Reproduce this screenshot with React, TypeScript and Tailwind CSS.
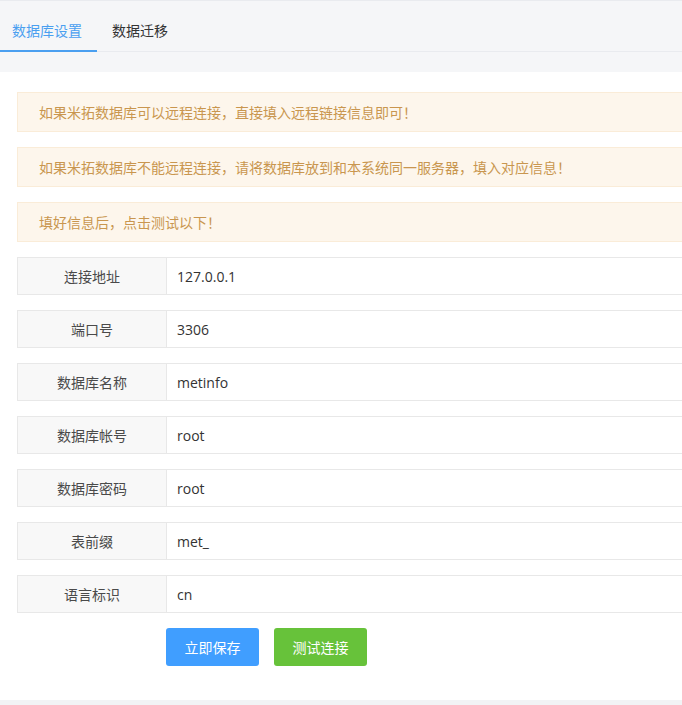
import React from "react";

const font = '"Open Sans", "Noto Sans CJK SC", sans-serif';

const alerts = [
  "如果米拓数据库可以远程连接，直接填入远程链接信息即可！",
  "如果米拓数据库不能远程连接，请将数据库放到和本系统同一服务器，填入对应信息！",
  "填好信息后，点击测试以下！",
];

const rows: [string, string][] = [
  ["连接地址", "127.0.0.1"],
  ["端口号", "3306"],
  ["数据库名称", "metinfo"],
  ["数据库帐号", "root"],
  ["数据库密码", "root"],
  ["表前缀", "met_"],
  ["语言标识", "cn"],
];

export default function App() {
  return (
    <div
      className="w-[682px] h-[705px] overflow-hidden bg-white relative flex flex-col text-[14px]"
      style={{ fontFamily: font }}
    >
      <div className="h-[72px] shrink-0 bg-[#f5f6f8] border-t border-[#e9ebef]">
        <div className="h-[51px] flex border-b border-[#e9ebef] pt-[8px]">
          <div className="relative pl-[12px] pr-[15px] flex items-center text-[#4a9ff0]">
            数据库设置
            <div className="absolute left-0 right-0 bottom-[-1px] h-[2px] bg-[#4a9ff0]" />
          </div>
          <div className="pl-[15px] flex items-center text-[#333]">数据迁移</div>
        </div>
      </div>
      <div className="flex-1 pl-[17px] pt-[20px] w-[720px]">
        <div className="flex flex-col gap-[15px]">
          {alerts.map((a) => (
            <div
              key={a}
              className="h-[40px] flex items-center pl-[21px] bg-[#fdf6ec] border border-[#faecd8] text-[#c9964f]"
            >
              {a}
            </div>
          ))}
        </div>
        <div className="flex flex-col gap-[15px] mt-[15px]">
          {rows.map(([k, v]) => (
            <div key={k} className="h-[38px] flex border border-[#e8e8e8]">
              <div className="w-[149px] shrink-0 bg-[#f8f8f8] border-r border-[#e8e8e8] flex items-center justify-center text-[#4a4a4a]">
                {k}
              </div>
              <div className="flex-1 flex items-center pl-[10px] text-[#333]">{v}</div>
            </div>
          ))}
        </div>
        <div className="flex gap-[15px] ml-[149px] mt-[15px]">
          <button className="w-[93px] h-[38px] rounded-[3px] bg-[#409eff] text-white">立即保存</button>
          <button className="w-[93px] h-[38px] rounded-[3px] bg-[#67c23a] text-white">测试连接</button>
        </div>
      </div>
      <div className="h-[5px] shrink-0 bg-[#f2f3f5]" />
    </div>
  );
}
